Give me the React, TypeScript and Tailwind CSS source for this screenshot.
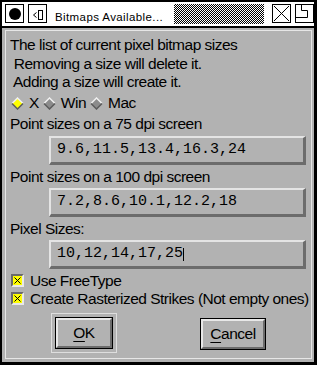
import React from "react";

const sans = "font-['Liberation_Sans',Arial,sans-serif]";

function Diamond({ on }: { on?: boolean }) {
  return (
    <svg width="13" height="13" viewBox="0 0 13 13">
      <polygon points="6.5,1 12,6.5 6.5,12 1,6.5" fill={on ? "#ffff00" : "#8c8c8c"} />
      <polyline points="1,6.5 6.5,1 12,6.5" fill="none" stroke="#f0f0f0" strokeWidth="1.5" />
      <polyline points="1,6.5 6.5,12 12,6.5" fill="none" stroke="#5c5c5c" strokeWidth="1.5" />
    </svg>
  );
}

function Check() {
  return (
    <div className="w-[13px] h-[13px] shrink-0 border-2 border-t-[#6a6a6a] border-l-[#6a6a6a] border-b-[#e8e8e8] border-r-[#e8e8e8] bg-[#ffff00] flex items-center justify-center">
      <svg width="9" height="9" viewBox="0 0 9 9">
        <path d="M1.5 1.5 L7.5 7.5 M7.5 1.5 L1.5 7.5" stroke="#000" strokeWidth="1" />
      </svg>
    </div>
  );
}

function Field({ value, cursor }: { value: string; cursor?: boolean }) {
  return (
    <div className="ml-[39px] w-[257px] h-[29px] shrink-0 border-t-2 border-l-2 border-b-[3px] border-r-[3px] border-t-[#e4e4e4] border-l-[#e4e4e4] border-b-[#6c6c6c] border-r-[#6c6c6c] pl-[6px] flex items-center font-['Liberation_Mono',monospace] text-[15px] leading-[24px] tracking-normal text-black">
      <span className="whitespace-pre">{value}</span>
      {cursor && <span className="w-px h-[13px] bg-black" />}
    </div>
  );
}

function Button({ label, w, h }: { label: React.ReactNode; w: string; h: string }) {
  return (
    <div className={`${w} ${h} border border-black`}>
      <div className="h-full border-2 border-t-[#e8e8e8] border-l-[#e8e8e8] border-b-[#6c6c6c] border-r-[#6c6c6c] flex items-center justify-center leading-[18px] text-black">
        {label}
      </div>
    </div>
  );
}

export default function App() {
  return (
    <div className={`w-[317px] h-[365px] flex flex-col border-l-2 border-t-2 border-r-[3px] border-b-[3px] border-black bg-black ${sans}`}>
      {/* title bar */}
      <div className="h-[26px] shrink-0 bg-white border-b-2 border-black flex items-start">
        <div className="ml-[3px] mt-[2px] w-[19px] h-[19px] border border-black flex items-center justify-center">
          <div className="w-[12px] h-[12px] rounded-full bg-black" />
        </div>
        <div className="ml-[4px] mt-[2px] w-[19px] h-[19px] border border-black">
          <svg width="17" height="17" viewBox="0 0 17 17">
            <rect x="9.5" y="5.5" width="4" height="9" fill="none" stroke="#000" />
            <polyline points="7.5,7.5 4.5,10 7.5,12.5" fill="none" stroke="#000" />
          </svg>
        </div>
        <div className="ml-[8px] mt-[7px] flex-1 text-[11.5px] leading-[16px] tracking-[0.4px] text-black whitespace-nowrap">
          Bitmaps Available...
        </div>
        <div className="mt-[2px] w-[90px] h-[20px] bg-[image:repeating-conic-gradient(#000_0%_25%,#fff_0%_50%)] bg-[length:2px_2px]" />
        <div className="ml-[8px] mt-[2px] w-[19px] h-[19px] border border-black">
          <svg width="17" height="17" viewBox="0 0 17 17">
            <path d="M1 1 L16 16 M16 1 L1 16" stroke="#000" strokeWidth="1" />
          </svg>
        </div>
        <div className="ml-[4px] mt-[2px] w-[19px] h-[19px] border border-black">
          <svg width="17" height="17" viewBox="0 0 17 17">
            <path d="M5.5 0 V5.5 H11.5 V12.5 H0" fill="none" stroke="#000" strokeWidth="1" />
          </svg>
        </div>
      </div>

      {/* body */}
      <div className="flex-1 bg-[#b2b2b2] pt-[2px] pl-[3px] pr-[2px] pb-[3px] flex">
        <div className="flex-1 border border-[#e6e6e6] flex flex-col pl-[4px] text-[15.5px] tracking-[-0.5px] text-black">
          <div className="pt-[5px] leading-[18.5px] whitespace-pre">
            <div>The list of current pixel bitmap sizes</div>
            <div> Removing a size will delete it.</div>
            <div> Adding a size will create it.</div>
          </div>

          <div className="mt-[2.5px] h-[18px] leading-[18px] flex items-center gap-[4px] pl-[1px]">
            <div className="flex items-center gap-[5px]">
              <Diamond on />
              <span>X</span>
            </div>
            <div className="flex items-center gap-[5px]">
              <Diamond />
              <span>Win</span>
            </div>
            <div className="flex items-center gap-[5px]">
              <Diamond />
              <span>Mac</span>
            </div>
          </div>

          <div className="mt-[3px] leading-[18px]">Point sizes on a 75 dpi screen</div>
          <div className="mt-[3px]">
            <Field value="9.6,11.5,13.4,16.3,24" />
          </div>
          <div className="mt-[3px] leading-[18px]">Point sizes on a 100 dpi screen</div>
          <div className="mt-[2px]">
            <Field value="7.2,8.6,10.1,12.2,18" />
          </div>
          <div className="mt-[2.5px] leading-[18px]">Pixel Sizes:</div>
          <div className="mt-[2.5px]">
            <Field value="10,12,14,17,25" cursor />
          </div>

          <div className="mt-[2.5px] h-[18px] leading-[18px] flex items-center gap-[6px] pl-[1px]">
            <Check />
            <span>Use FreeType</span>
          </div>
          <div className="h-[18px] leading-[18px] flex items-center gap-[6px] pl-[1px]">
            <Check />
            <span className="whitespace-nowrap">Create Rasterized Strikes (Not empty ones)</span>
          </div>

          <div className="mt-[5.5px] ml-[41px] flex items-start gap-[83px]">
            <div className="w-[66px] h-[40px] border border-[#dedede] p-[3px]">
              <Button
                w="w-[58px]"
                h="h-[32px]"
                label={
                  <span>
                    <span className="underline underline-offset-[3px]">O</span>K
                  </span>
                }
              />
            </div>
            <div className="mt-[5px]">
              <Button
                w="w-[66px]"
                h="h-[32px]"
                label={
                  <span>
                    <span className="underline underline-offset-[3px]">C</span>ancel
                  </span>
                }
              />
            </div>
          </div>
        </div>
      </div>
    </div>
  );
}
